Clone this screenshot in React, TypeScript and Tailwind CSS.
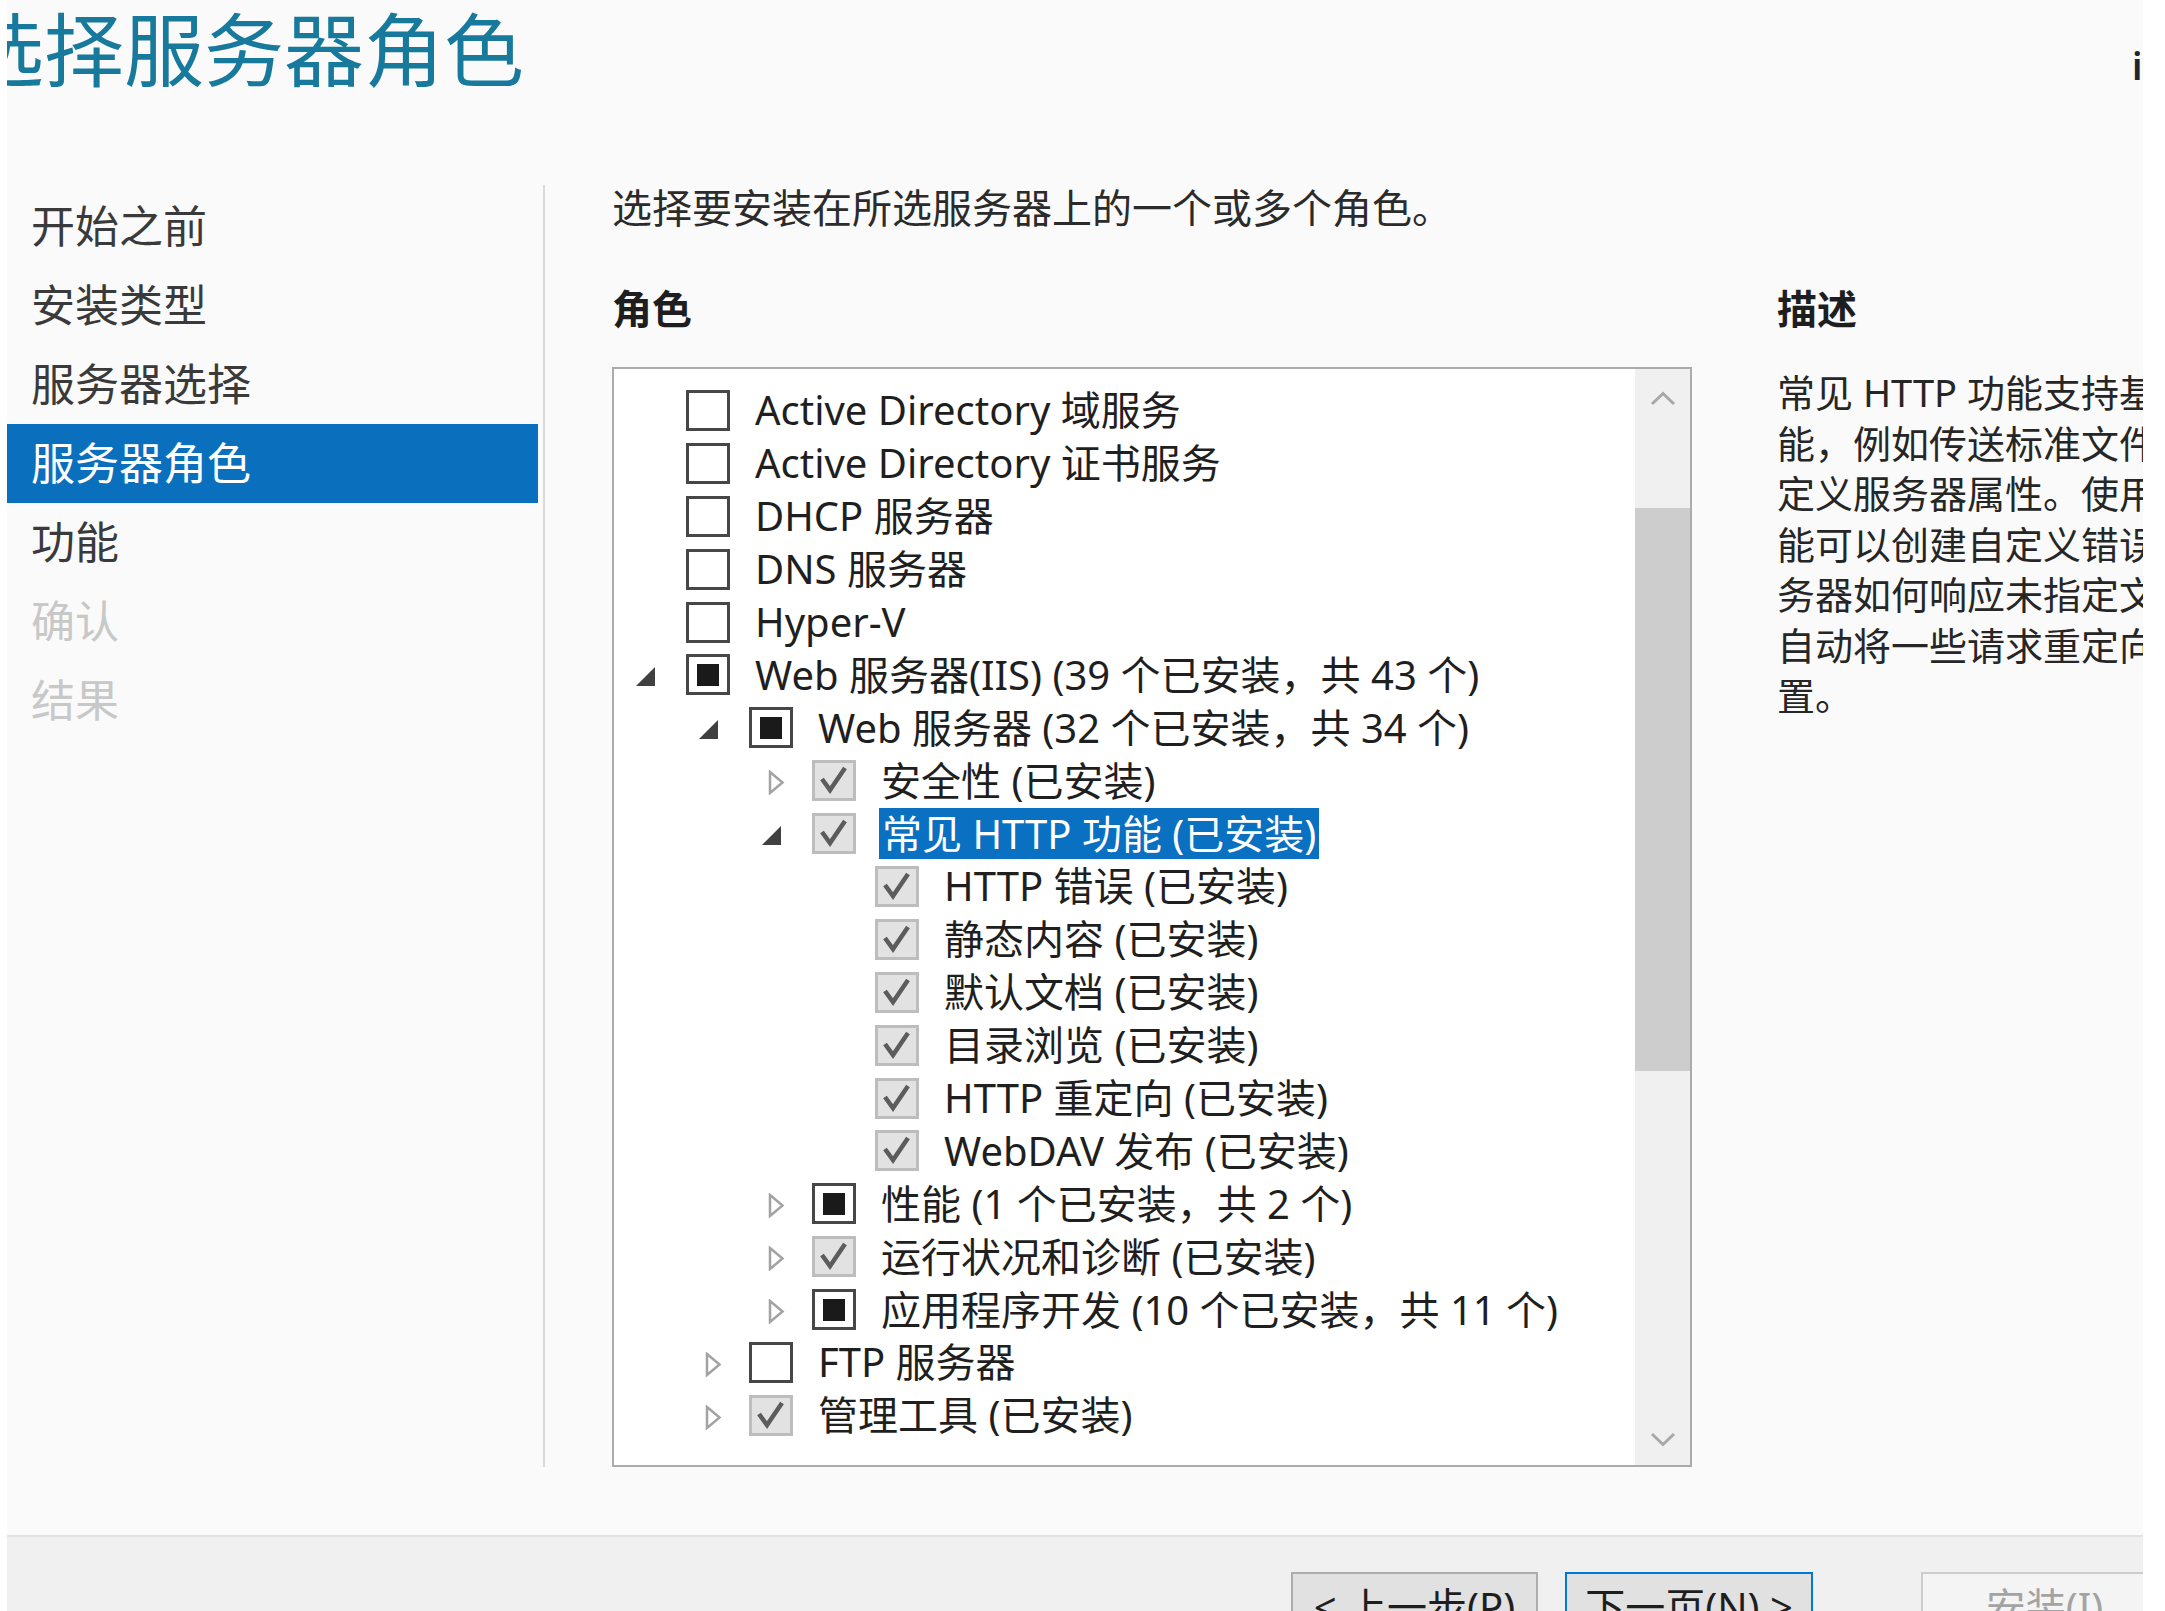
import React from "react";

type Row = {
  level: number;
  exp: "open" | "closed" | null;
  box: "off" | "mixed" | "on";
  text: string;
  sel?: boolean;
};

const rows: Row[] = [
  { level: 0, exp: null, box: "off", text: "Active Directory 域服务" },
  { level: 0, exp: null, box: "off", text: "Active Directory 证书服务" },
  { level: 0, exp: null, box: "off", text: "DHCP 服务器" },
  { level: 0, exp: null, box: "off", text: "DNS 服务器" },
  { level: 0, exp: null, box: "off", text: "Hyper-V" },
  { level: 0, exp: "open", box: "mixed", text: "Web 服务器(IIS) (39 个已安装，共 43 个)" },
  { level: 1, exp: "open", box: "mixed", text: "Web 服务器 (32 个已安装，共 34 个)" },
  { level: 2, exp: "closed", box: "on", text: "安全性 (已安装)" },
  { level: 2, exp: "open", box: "on", text: "常见 HTTP 功能 (已安装)", sel: true },
  { level: 3, exp: null, box: "on", text: "HTTP 错误 (已安装)" },
  { level: 3, exp: null, box: "on", text: "静态内容 (已安装)" },
  { level: 3, exp: null, box: "on", text: "默认文档 (已安装)" },
  { level: 3, exp: null, box: "on", text: "目录浏览 (已安装)" },
  { level: 3, exp: null, box: "on", text: "HTTP 重定向 (已安装)" },
  { level: 3, exp: null, box: "on", text: "WebDAV 发布 (已安装)" },
  { level: 2, exp: "closed", box: "mixed", text: "性能 (1 个已安装，共 2 个)" },
  { level: 2, exp: "closed", box: "on", text: "运行状况和诊断 (已安装)" },
  { level: 2, exp: "closed", box: "mixed", text: "应用程序开发 (10 个已安装，共 11 个)" },
  { level: 1, exp: "closed", box: "off", text: "FTP 服务器" },
  { level: 1, exp: "closed", box: "on", text: "管理工具 (已安装)" },
];

const indent = ["pl-[20px]", "pl-[83px]", "pl-[146px]", "pl-[209px]"];

const steps = [
  { label: "开始之前", state: "done" },
  { label: "安装类型", state: "done" },
  { label: "服务器选择", state: "done" },
  { label: "服务器角色", state: "active" },
  { label: "功能", state: "done" },
  { label: "确认", state: "off" },
  { label: "结果", state: "off" },
];

const description = [
  "常见 HTTP 功能支持基本 HTTP 功",
  "能，例如传送标准文件格式和配置自",
  "定义服务器属性。使用常见 HTTP 功",
  "能可以创建自定义错误消息以配置服",
  "务器如何响应未指定文档的请求，并",
  "自动将一些请求重定向到其他位",
  "置。",
];

function Expander({ exp }: { exp: Row["exp"] }) {
  return (
    <div className="w-[52px] h-full flex items-center shrink-0">
      {exp === "open" && (
        <svg width="19" height="19" viewBox="0 0 19 19" className="ml-[2px] mt-[4px]">
          <polygon points="19,0 19,19 0,19" fill="#404040" />
        </svg>
      )}
      {exp === "closed" && (
        <svg width="17" height="25" viewBox="0 0 17 25" className="ml-[8px] mt-[4px]">
          <polygon points="2,2 14.5,12.5 2,23" fill="#ffffff" stroke="#a3a3a3" strokeWidth="2.5" />
        </svg>
      )}
    </div>
  );
}

function CheckBox({ box }: { box: Row["box"] }) {
  if (box === "on") {
    return (
      <div className="w-[44px] h-[41px] shrink-0 border-[3px] border-[#bdbdbd] bg-[#e2e2e2]">
        <svg width="38" height="35" viewBox="0 0 38 35">
          <polyline points="7,16 15,27 30,5" fill="none" stroke="#5c5c5c" strokeWidth="4.5" />
        </svg>
      </div>
    );
  }
  return (
    <div className="w-[44px] h-[41px] shrink-0 border-[3px] border-[#474747] bg-white flex items-center justify-center">
      {box === "mixed" && <div className="w-[22px] h-[22px] bg-[#1a1a1a]" />}
    </div>
  );
}

export default function App() {
  return (
    <div className="w-[2165px] h-[1611px] overflow-hidden bg-white flex font-['Noto_Sans','Noto_Sans_CJK_SC',sans-serif]">
      <div className="w-[7px] shrink-0" />
      <div className="w-[2136px] shrink-0 flex flex-col bg-[#fafafa] overflow-hidden">
        {/* header */}
        <div className="h-[183px] shrink-0 flex items-start">
          <div className="ml-[-43px] mt-[9px] text-[80px] leading-[80px] text-[#17799b] whitespace-nowrap">
            选择服务器角色
          </div>
          <div className="flex-1" />
          <div className="w-[11px] overflow-hidden mt-[47px] text-[37px] leading-[37px] font-semibold text-[#1d2433] whitespace-nowrap">
            iZ8vb6
          </div>
        </div>

        {/* body */}
        <div className="h-[1352px] shrink-0 flex">
          <div className="w-[531px] shrink-0 pt-[4px] flex flex-col">
            {steps.map((s) => (
              <div
                key={s.label}
                className={`h-[79px] pl-[24px] text-[44px] leading-[79px] whitespace-nowrap ${
                  s.state === "active"
                    ? "bg-[#0a6fbd] text-white"
                    : s.state === "off"
                      ? "text-[#c8c8c8]"
                      : "text-[#3a3a3a]"
                }`}
              >
                {s.label}
              </div>
            ))}
          </div>
          <div className="ml-[5px] mt-[2px] w-[2px] h-[1282px] bg-[#dadada] shrink-0" />

          <div className="flex-1 pl-[67px] flex flex-col min-w-0">
            <div className="h-[50px] text-[40px] leading-[50px] text-[#2b2b2b] whitespace-nowrap">
              选择要安装在所选服务器上的一个或多个角色。
            </div>

            <div className="mt-[51px] flex min-w-0">
              {/* roles */}
              <div className="w-[1080px] shrink-0 flex flex-col">
                <div className="h-[50px] text-[40px] leading-[50px] font-bold text-[#1e1e1e]">角色</div>
                <div className="mt-[33px] h-[1100px] border-2 border-[#ababab] bg-white flex">
                  <div className="flex-1 pt-[15px] overflow-hidden">
                    {rows.map((r, i) => (
                      <div key={i} className={`h-[52.9px] flex items-center ${indent[r.level]}`}>
                        <Expander exp={r.exp} />
                        <CheckBox box={r.box} />
                        {r.sel ? (
                          <span className="ml-[23px] px-[3px] h-[51px] leading-[51px] text-[40px] bg-[#0a70c2] text-white whitespace-nowrap">
                            {r.text}
                          </span>
                        ) : (
                          <span className="ml-[25px] text-[40px] leading-[50px] text-[#1f1f1f] whitespace-nowrap">
                            {r.text}
                          </span>
                        )}
                      </div>
                    ))}
                  </div>
                  {/* scrollbar */}
                  <div className="w-[55px] shrink-0 bg-[#f0f0f0] flex flex-col">
                    <div className="h-[51px] flex items-center justify-center pt-[8px]">
                      <svg width="26" height="15" viewBox="0 0 26 15">
                        <polyline points="2,13 13,2.5 24,13" fill="none" stroke="#a8a8a8" strokeWidth="3" />
                      </svg>
                    </div>
                    <div className="flex-1">
                      <div className="mt-[88px] h-[563px] bg-[#cdcdcd]" />
                    </div>
                    <div className="h-[52px] flex items-center justify-center">
                      <svg width="26" height="15" viewBox="0 0 26 15">
                        <polyline points="2,2 13,12.5 24,2" fill="none" stroke="#a8a8a8" strokeWidth="3" />
                      </svg>
                    </div>
                  </div>
                </div>
              </div>

              {/* description */}
              <div className="ml-[85px] flex-1 min-w-0 overflow-hidden flex flex-col">
                <div className="h-[50px] text-[40px] leading-[50px] font-bold text-[#1e1e1e] whitespace-nowrap">描述</div>
                <div className="mt-[33px] text-[38px] leading-[50.5px] text-[#262626]">
                  {description.map((l, i) => (
                    <div key={i} className="whitespace-nowrap">
                      {l}
                    </div>
                  ))}
                </div>
              </div>
            </div>
          </div>
        </div>

        {/* footer */}
        <div className="h-[120px] shrink-0 border-t-2 border-[#e2e2e2] bg-[#f0f0f0] flex items-start pt-[35px] pl-[1284px]">
          <button className="w-[247px] h-[70px] shrink-0 border-2 border-[#adadad] bg-[#e1e1e1] text-[40px] leading-[40px] text-[#1e1e1e] whitespace-nowrap">
            &lt; 上一步(P)
          </button>
          <button className="ml-[27px] w-[248px] h-[70px] shrink-0 border-2 border-[#0078d7] bg-[#e1e1e1] text-[40px] leading-[40px] text-[#1e1e1e] whitespace-nowrap">
            下一页(N) &gt;
          </button>
          <button className="ml-[108px] w-[247px] h-[70px] shrink-0 border-2 border-[#cccccc] bg-[#f4f4f4] text-[40px] leading-[40px] text-[#a3a3a3] whitespace-nowrap">
            安装(I)
          </button>
        </div>
      </div>
      <div className="flex-1 bg-white" />
    </div>
  );
}
